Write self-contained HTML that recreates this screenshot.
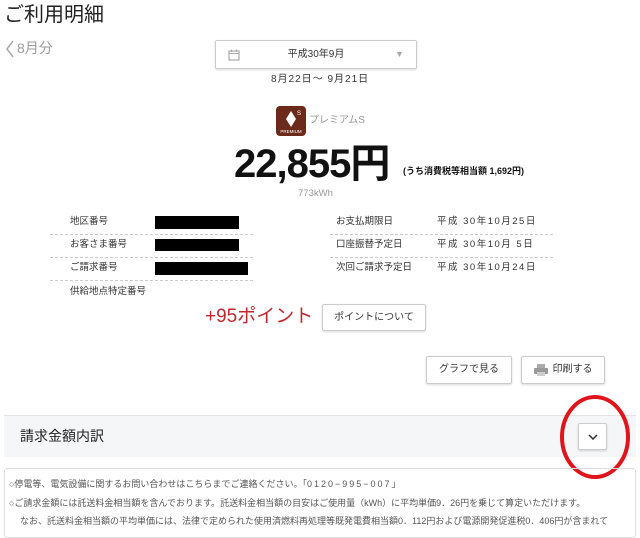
<!DOCTYPE html>
<html><head><meta charset="utf-8"><style>
*{margin:0;padding:0;box-sizing:border-box}
body{width:640px;height:525px;overflow:hidden;background:#fff;font-family:"Liberation Sans","Noto Sans CJK JP",sans-serif;color:#333;position:relative;line-height:1.2}
.a{position:absolute;white-space:nowrap}
.btn{position:absolute;border:1px solid #ccc;border-radius:2px;background:#fff;box-shadow:0 1px 2px rgba(0,0,0,.15);font-size:10px;color:#333;display:flex;align-items:center;justify-content:center}
.lbl{font-size:9.5px;color:#333}
.dl{position:absolute;border-top:1px dashed #ccc;height:0}
.blk{position:absolute;background:#000}
</style></head><body>
<div class="a" style="left:4px;top:3px;font-size:20px;color:#222">ご利用明細</div>
<svg class="a" style="left:5px;top:40px" width="10" height="18"><polyline points="8,1 2,9 8,17" fill="none" stroke="#aaa" stroke-width="1.5"/></svg>
<div class="a" style="left:17px;top:40px;font-size:14px;color:#999">8月分</div>
<div class="btn" style="left:215px;top:40px;width:202px;height:29px;font-size:10px">平成30年9月
 <svg class="a" style="left:12px;top:8px" width="12" height="12" viewBox="0 0 12 12"><rect x="1" y="2" width="10" height="9" fill="none" stroke="#aaa" stroke-width="1.2"/><line x1="1" y1="4.5" x2="11" y2="4.5" stroke="#aaa"/><line x1="3.5" y1="0.5" x2="3.5" y2="3" stroke="#aaa"/><line x1="8.5" y1="0.5" x2="8.5" y2="3" stroke="#aaa"/></svg>
 <div class="a" style="left:179px;top:8px;font-size:9px;color:#aaa">▼</div></div>
<div class="a" style="left:271px;top:74px;font-size:10px;letter-spacing:1px">8月22日〜 9月21日</div>
<div class="a" style="left:276px;top:106px;width:30px;height:30px;border-radius:4px;background:#6b2a1a">
 <svg width="30" height="30"><polygon points="15,5 20,13 15,21 10,13" fill="#fff"/><text x="21" y="9" font-size="6" fill="#fff">S</text><text x="15" y="27" font-size="4.5" fill="#fff" text-anchor="middle">PREMIUM</text></svg></div>
<div class="a" style="left:309px;top:115px;font-size:10px;color:#999">プレミアムS</div>
<div class="a" style="left:234px;top:140px;font-size:40px;line-height:48px;font-weight:bold;color:#111;letter-spacing:-1px">22,855円</div>
<div class="a" style="left:403px;top:166px;font-size:9px;font-weight:bold;color:#111">(うち消費税等相当額 1,692円)</div>
<div class="a" style="left:298px;top:188px;font-size:9.5px;color:#999">773kWh</div>

<div class="a lbl" style="left:70px;top:216px">地区番号</div>
<div class="a lbl" style="left:70px;top:239px">お客さま番号</div>
<div class="a lbl" style="left:70px;top:262px">ご請求番号</div>
<div class="a lbl" style="left:70px;top:286px">供給地点特定番号</div>
<div class="dl" style="left:50px;top:234px;width:203px"></div>
<div class="dl" style="left:50px;top:257px;width:203px"></div>
<div class="dl" style="left:50px;top:280px;width:203px"></div>
<div class="blk" style="left:155px;top:216px;width:84px;height:13px"></div>
<div class="blk" style="left:155px;top:239px;width:84px;height:12px"></div>
<div class="blk" style="left:155px;top:262px;width:93px;height:13px"></div>

<div class="a lbl" style="left:336px;top:216px">お支払期限日</div>
<div class="a lbl" style="left:336px;top:239px">口座振替予定日</div>
<div class="a lbl" style="left:336px;top:262px">次回ご請求予定日</div>
<div class="a lbl" style="left:437px;top:216px;letter-spacing:1.5px">平成 30年10月25日</div>
<div class="a lbl" style="left:437px;top:239px;letter-spacing:1.5px">平成 30年10月 5日</div>
<div class="a lbl" style="left:437px;top:262px;letter-spacing:1.5px">平成 30年10月24日</div>
<div class="dl" style="left:330px;top:234px;width:223px"></div>
<div class="dl" style="left:330px;top:257px;width:223px"></div>

<div class="a" style="left:205px;top:306px;font-size:19px;color:#c0282d">+95ポイント</div>
<div class="btn" style="left:322px;top:304px;width:104px;height:27px">ポイントについて</div>
<div class="btn" style="left:426px;top:356px;width:86px;height:28px">グラフで見る</div>
<div class="btn" style="left:521px;top:356px;width:84px;height:28px"><svg width="14" height="12" style="margin-right:5px"><rect x="3" y="0" width="8" height="4" fill="#aaa"/><rect x="0" y="4" width="14" height="6" rx="1" fill="#999"/><rect x="3" y="8" width="8" height="4" fill="#ccc"/></svg>印刷する</div>

<div class="a" style="left:4px;top:415px;width:632px;height:42px;background:#f5f6f8;border-top:1px solid #e3e3e3"></div>
<div class="a" style="left:20px;top:428px;font-size:14px;color:#222">請求金額内訳</div>
<div class="btn" style="left:578px;top:423px;width:29px;height:27px"><svg width="10" height="6"><polyline points="1,1 5,5 9,1" fill="none" stroke="#333" stroke-width="1.5"/></svg></div>
<svg class="a" style="left:558px;top:394px" width="74" height="86"><ellipse cx="37" cy="43" rx="33" ry="40" fill="none" stroke="#e0141b" stroke-width="4"/></svg>

<div class="a" style="left:4px;top:468px;width:632px;height:70px;border:1px solid #ddd;border-radius:3px"></div>
<div class="a" style="left:9px;top:479px;font-size:9px;color:#555">○停電等、電気設備に関するお問い合わせはこちらまでご連絡ください。「<span style="letter-spacing:2px">0120−995−007</span>」</div>
<div class="a" style="left:9px;top:498px;font-size:9px;color:#555">○ご請求金額には託送料金相当額を含んでおります。託送料金相当額の目安はご使用量（kWh）に平均単価9．26円を乗じて算定いただけます。</div>
<div class="a" style="left:20px;top:516px;font-size:9px;color:#555">なお、託送料金相当額の平均単価には、法律で定められた使用済燃料再処理等既発電費相当額0．112円および電源開発促進税0．406円が含まれて</div>
</body></html>
